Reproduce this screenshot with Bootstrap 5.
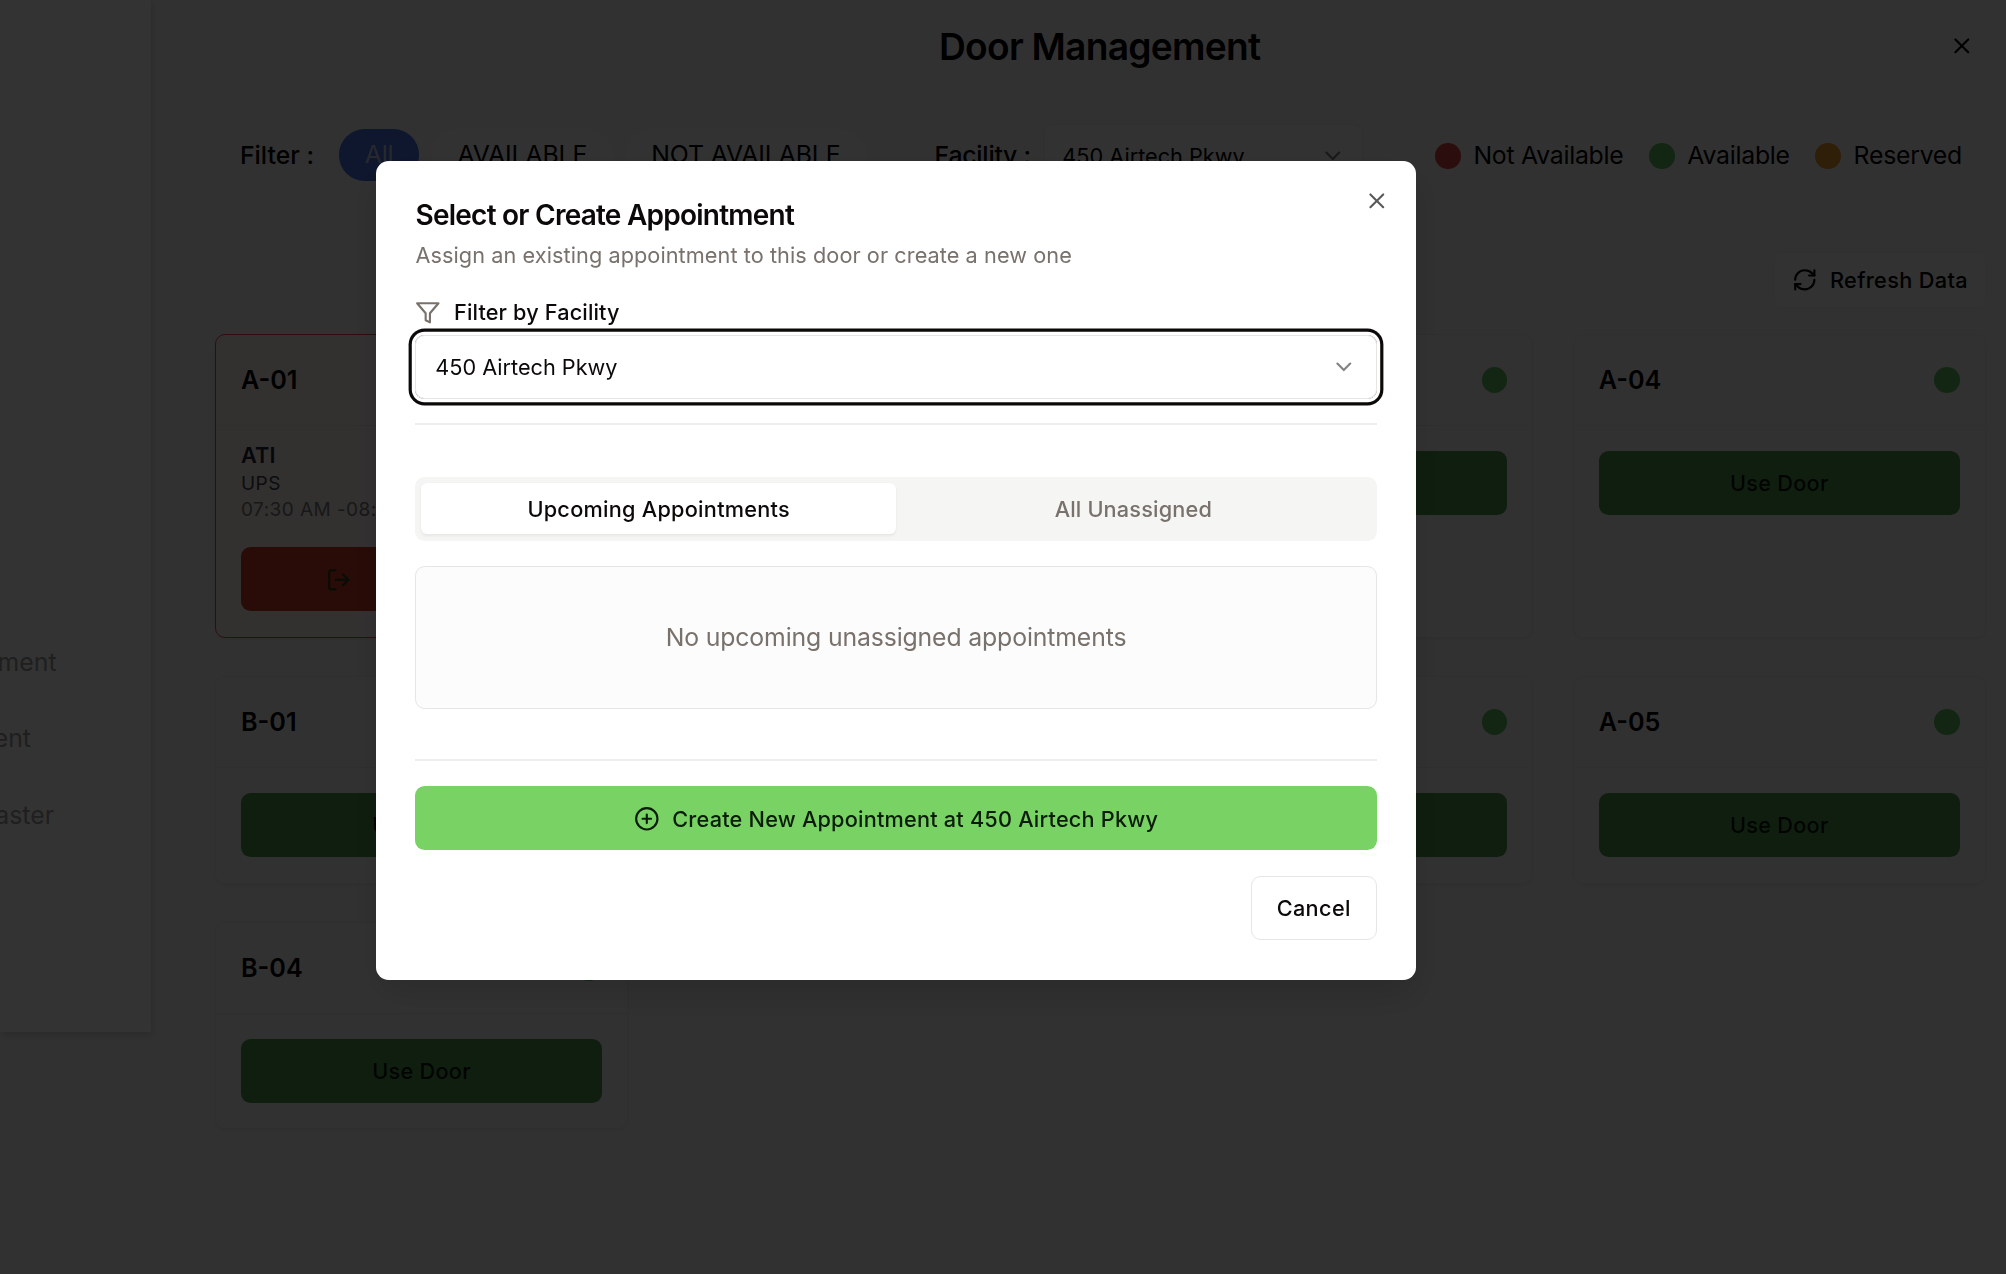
<!DOCTYPE html>
<html lang="en">
<head>
<meta charset="utf-8">
<meta name="viewport" content="width=device-width, initial-scale=1">
<title>Door Management</title>
<link href="https://cdn.jsdelivr.net/npm/bootstrap@5.3.0/dist/css/bootstrap.min.css" rel="stylesheet">
<style>
  html { font-size: 25.6px; }
  body { font-family: Inter, "Noto Sans", sans-serif; font-size: 24.8px; line-height: 1.5; color: #000; background: #f5f5f5; height: 1274px; overflow: hidden; }
  svg { display: block; flex: none; }
  .ico { width: 25.6px; height: 25.6px; fill: none; stroke: currentColor; stroke-width: 2; stroke-linecap: round; stroke-linejoin: round; }
  .app { height: 1274px; }
  .fw5 { font-weight: 500; }

  /* navigation drawer, slid partly out of view */
  .side { width: 151px; height: 1032px; background: #fff; box-shadow: 1px 3px 8px rgba(0,0,0,.15); padding-top: 624px; flex: none; overflow: hidden; }
  .side-link { height: 76.5px; color: #9a9a9a; width: 56.5px; display: flex; align-items: center; justify-content: flex-end; text-decoration: none; }
  .side-link:nth-child(2) { width: 31px; }
  .side-link:nth-child(3) { width: 54px; }

  .page { padding: 0 19.5px 0 64px; min-width: 0; }
  .page-head { height: 92px; }
  .page-title { font-size: 37.2px; font-weight: 600; letter-spacing: -.75px; line-height: 1; flex: 1; text-align: center; margin: 2px 0 0 0; padding-left: 35.5px; }
  .page-x { margin-right: 12px; }

  .filters { height: 64px; margin-top: 31.5px; padding: 1px 0 0 25px; }
  .filters > span { white-space: nowrap; }
  .chips { gap: 12.8px; margin-left: 25.2px; }
  .chip { height: 51.2px; border-radius: 25.6px; padding: 0 25.6px; background: #fafafa; line-height: 51.2px; white-space: nowrap; letter-spacing: -.12px; position: relative; top: -1px; }
  .chip-on { background: #4573e0; color: #c3cde6; }
  .fac { margin-left: 68.5px; letter-spacing: -.23px; }
  .pick { width: 319px; height: 64px; flex: none; margin-left: 13.5px; border: 1.6px solid #ebebeb; border-radius: 9.6px; background: #f9f9f9; font-size: 21.7px; padding: 0 17px 0 17px; }
  .legend { gap: 25.6px; margin-left: auto; padding-right: 24.5px; letter-spacing: -.25px; }
  .legend > div { gap: 12.6px; white-space: nowrap; }
  .dot { width: 25.6px; height: 25.6px; border-radius: 50%; flex: none; background: #5abe5f; }
  .lg-red { background: #dc4141; }
  .lg-green { background: #5abe5f; }
  .lg-orange { background: #eb9628; }

  .refresh { width: 213.5px; height: 56px; margin: 64px 0 26.7px auto; background: #f9f9f9; border: 1.6px solid #efefef; border-radius: 9.6px; font-size: 21.7px; font-weight: 500; letter-spacing: .36px; padding: 1px 17.5px 0 17.5px; }

  .doors { display: grid; grid-template-columns: repeat(4, 413px); column-gap: 39.6px; row-gap: 38.5px; width: 1772px; }
  .door { border: 1px solid #e8e8e8; border-radius: 10px; background: #f6f6f6; box-shadow: 0 2px 3px rgba(0,0,0,.05); }
  .door-head { height: 91px; padding: 0 25px; border-bottom: 1px solid #e8e8e8; font-size: 25.2px; font-weight: 600; }
  .door-name { padding-top: 1.4px; }
  .door-body { padding: 25.2px 25px; }
  .act { height: 64px; width: 100%; border-radius: 9.6px; background: #509650; font-size: 21.7px; font-weight: 500; letter-spacing: .28px; color: rgba(0,0,0,.87); display: flex; align-items: center; justify-content: center; }
  .door-busy { border-color: #f04646; background: #fbf2f1; }
  .door-busy .door-body { padding-top: 12.5px; }
  .carrier { line-height: 32px; font-size: 21.7px; font-weight: 600; letter-spacing: .15px; color: #1e2332; }
  .small-line { line-height: 25.6px; font-size: 19px; letter-spacing: .45px; color: #3c4150; white-space: nowrap; padding-top: .8px; margin-bottom: -.8px; }
  .small-time { color: #787878; margin-bottom: 24.8px; }
  .act-out { background: #cd3a28; color: #1e4119; gap: 12.8px; }
  .out-label { width: 152px; }

  .shade { position: fixed; inset: 0; background: rgba(0,0,0,.8); }

  .dlg { position: fixed; left: 376px; top: 160.7px; width: 1040px; height: 819px; background: #fff; border-radius: 12.8px; padding: 40px 39px; color: #0c0a09; font-size: 21.7px; box-shadow: 0 16px 36px rgba(0,0,0,.14); }
  .dlg-x { position: absolute; right: 26.2px; top: 27.1px; color: #5a5a58; }
  .dlg-title { font-size: 28px; font-weight: 600; letter-spacing: -.76px; line-height: 28.8px; margin: 0 0 9.6px; padding-left: .5px; }
  .muted { color: #78716c; }
  .dlg-sub { line-height: 32px; letter-spacing: .065px; margin: 0 0 25.3px; padding-left: .5px; }
  .dlg-lab { height: 32px; font-weight: 500; letter-spacing: .14px; gap: 13.4px; margin-bottom: 6.4px; }
  .dlg-pick { height: 64px; border: 1.6px solid #e7e5e4; border-radius: 9.6px; padding: 0 19.2px; box-shadow: 0 0 0 3.2px #fff, 0 0 0 6.4px #0c0a09; }
  .dlg-pick .ico, .pick .ico { opacity: .5; }
  .txt-low { padding-top: 1.4px; }
  .rule { height: 1.6px; background: #efeeee; }
  .rule-top { margin-top: 24.6px; }
  .tabs { height: 64px; background: #f5f5f4; border-radius: 9.6px; padding: 6.4px; margin: 51.7px 0 25px; font-weight: 500; }
  .tab-item { flex: 1; height: 51.2px; display: flex; align-items: center; justify-content: center; border-radius: 6.4px; letter-spacing: .17px; }
  .tab-on { background: #fff; box-shadow: 0 1.6px 3px rgba(0,0,0,.06); letter-spacing: .26px; }
  .none-box { height: 143px; border: 1.6px solid #e7e5e4; border-radius: 9.6px; background: #fcfcfc; font-size: 24.8px; letter-spacing: -.14px; margin-bottom: 50.6px; }
  .create { height: 64px; background: #78d364; border-radius: 9.6px; margin: 25.6px 0; font-weight: 500; letter-spacing: .21px; color: #0b1c08; gap: 12.8px; }
  .cancel { width: 126.5px; height: 64px; border: 1.6px solid #e7e5e4; border-radius: 9.6px; margin-left: auto; font-weight: 500; letter-spacing: .35px; }
</style>
<script src="https://cdn.jsdelivr.net/npm/bootstrap@5.3.0/dist/js/bootstrap.bundle.min.js"></script>
</head>
<body>
<div class="app d-flex">
  <nav class="side">
    <a class="side-link">ment</a>
    <a class="side-link">ent</a>
    <a class="side-link">aster</a>
  </nav>
  <main class="page flex-grow-1">
    <header class="page-head d-flex align-items-center">
      <h1 class="page-title">Door Management</h1>
      <svg class="ico page-x" viewBox="0 0 24 24"><path d="M18 6 6 18M6 6l12 12"/></svg>
    </header>
    <section class="filters d-flex align-items-center">
      <span class="fw5">Filter :</span>
      <div class="d-flex chips">
        <span class="chip chip-on">All</span>
        <span class="chip">AVAILABLE</span>
        <span class="chip">NOT AVAILABLE</span>
      </div>
      <span class="fw5 fac">Facility :</span>
      <div class="pick d-flex align-items-center justify-content-between">
        <span>450 Airtech Pkwy</span>
        <svg class="ico" viewBox="0 0 24 24"><path d="m6 9 6 6 6-6"/></svg>
      </div>
      <div class="legend d-flex">
        <div class="d-flex align-items-center"><span class="dot lg-red"></span><span>Not Available</span></div>
        <div class="d-flex align-items-center"><span class="dot lg-green"></span><span>Available</span></div>
        <div class="d-flex align-items-center"><span class="dot lg-orange"></span><span>Reserved</span></div>
      </div>
    </section>
    <div class="refresh d-flex align-items-center justify-content-between">
      <svg class="ico" viewBox="0 0 24 24"><path d="M3 12a9 9 0 0 1 9-9 9.75 9.75 0 0 1 6.74 2.74L21 8"/><path d="M21 3v5h-5"/><path d="M21 12a9 9 0 0 1-9 9 9.75 9.75 0 0 1-6.74-2.74L3 16"/><path d="M8 16H3v5"/></svg>
      <span>Refresh Data</span>
    </div>
    <section class="doors">
      <article class="door door-busy">
        <div class="door-head d-flex align-items-center justify-content-between"><span class="door-name">A-01</span></div>
        <div class="door-body">
          <div class="carrier">ATI</div>
          <div class="small-line">UPS</div>
          <div class="small-line small-time">07:30 AM -08:30</div>
          <div class="act act-out">
            <svg class="ico" viewBox="0 0 24 24"><path d="M9 21H5a2 2 0 0 1-2-2V5a2 2 0 0 1 2-2h4"/><path d="m16 17 5-5-5-5"/><path d="M21 12H9"/></svg>
            <span class="out-label"></span>
          </div>
        </div>
      </article>
      <article class="door"></article>
      <article class="door">
        <div class="door-head d-flex align-items-center justify-content-end"><span class="dot"></span></div>
        <div class="door-body"><div class="act"></div></div>
      </article>
      <article class="door">
        <div class="door-head d-flex align-items-center justify-content-between"><span class="door-name">A-04</span><span class="dot"></span></div>
        <div class="door-body"><div class="act">Use Door</div></div>
      </article>
      <article class="door">
        <div class="door-head d-flex align-items-center justify-content-between"><span class="door-name">B-01</span></div>
        <div class="door-body"><div class="act">Use Door</div></div>
      </article>
      <article class="door"></article>
      <article class="door">
        <div class="door-head d-flex align-items-center justify-content-end"><span class="dot"></span></div>
        <div class="door-body"><div class="act"></div></div>
      </article>
      <article class="door">
        <div class="door-head d-flex align-items-center justify-content-between"><span class="door-name">A-05</span><span class="dot"></span></div>
        <div class="door-body"><div class="act">Use Door</div></div>
      </article>
      <article class="door">
        <div class="door-head d-flex align-items-center justify-content-between"><span class="door-name">B-04</span><span class="dot"></span></div>
        <div class="door-body"><div class="act">Use Door</div></div>
      </article>
    </section>
  </main>
</div>
<div class="shade"></div>
<div class="dlg" role="dialog">
  <svg class="ico dlg-x" viewBox="0 0 24 24"><path d="M18 6 6 18M6 6l12 12"/></svg>
  <h2 class="dlg-title">Select or Create Appointment</h2>
  <p class="dlg-sub muted">Assign an existing appointment to this door or create a new one</p>
  <div class="dlg-lab d-flex align-items-center">
    <svg class="ico muted" viewBox="0 0 24 24"><path d="M22 3H2l8 9.46V19l4 2v-8.54L22 3z"/></svg>
    <span>Filter by Facility</span>
  </div>
  <div class="dlg-pick d-flex align-items-center justify-content-between">
    <span class="txt-low">450 Airtech Pkwy</span>
    <svg class="ico" viewBox="0 0 24 24"><path d="m6 9 6 6 6-6"/></svg>
  </div>
  <div class="rule rule-top"></div>
  <div class="tabs d-flex">
    <div class="tab-item tab-on"><span class="txt-low">Upcoming Appointments</span></div>
    <div class="tab-item muted"><span class="txt-low">All Unassigned</span></div>
  </div>
  <div class="none-box muted d-flex align-items-center justify-content-center"><span class="txt-low">No upcoming unassigned appointments</span></div>
  <div class="rule"></div>
  <div class="create d-flex align-items-center justify-content-center">
    <svg class="ico" viewBox="0 0 24 24"><circle cx="12" cy="12" r="10"/><path d="M8 12h8M12 8v8"/></svg>
    <span class="txt-low">Create New Appointment at 450 Airtech Pkwy</span>
  </div>
  <div class="cancel d-flex align-items-center justify-content-center">Cancel</div>
</div>
</body>
</html>
